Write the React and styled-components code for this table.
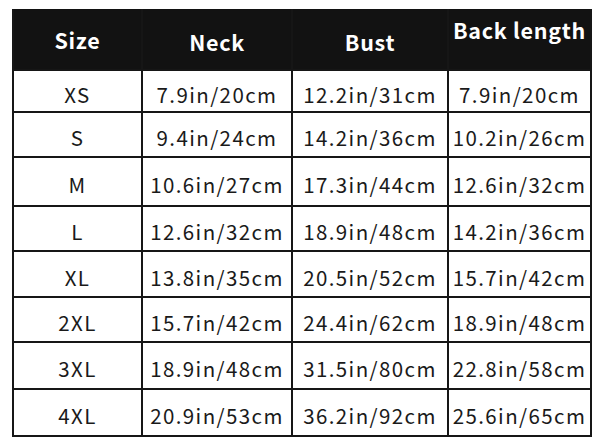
import React from "react";
import styled, { createGlobalStyle } from "styled-components";

const Global = createGlobalStyle`
  html, body { margin: 0; padding: 0; background: #fff; }
  body { font-family: "Noto Sans CJK SC", "Noto Sans", sans-serif; }
`;

const Page = styled.div`
  width: 593px;
  height: 444px;
  padding: 9px 0 0 12px;
  box-sizing: border-box;
  background: #fff;
`;

const Grid = styled.div`
  display: grid;
  width: 580px;
  box-sizing: border-box;
  grid-template-columns: 127px 148px 154px 141px;
  grid-template-rows: 60px 40px 43px 47px 43px 44px 43px 45px 45px;
  gap: 2px;
  padding: 0 2px 2px 2px;
  background: #161616;
`;

const HeadCell = styled.div`
  background: #121212;
  color: #fff;
  font-weight: 700;
  font-size: 21.5px;
  letter-spacing: 0.7px;
  display: flex;
  justify-content: center;
  align-items: ${(p) => (p.$top ? "flex-start" : "center")};
  padding-top: ${(p) => p.$shift || 0}px;
  box-sizing: border-box;
  white-space: nowrap;
  line-height: 1;
`;

const Cell = styled.div`
  background: #fff;
  color: #1a1a1a;
  font-size: 20.5px;
  letter-spacing: 1.4px;
  display: flex;
  justify-content: center;
  align-items: center;
  padding-top: 6px;
  box-sizing: border-box;
  white-space: nowrap;
  line-height: 1;
`;

const headers = [
  { label: "Size", shift: 2 },
  { label: "Neck", shift: 6 },
  { label: "Bust", shift: 6 },
  { label: "Back length", top: true, shift: 10 },
];

const rows = [
  ["XS", "7.9in/20cm", "12.2in/31cm", "7.9in/20cm"],
  ["S", "9.4in/24cm", "14.2in/36cm", "10.2in/26cm"],
  ["M", "10.6in/27cm", "17.3in/44cm", "12.6in/32cm"],
  ["L", "12.6in/32cm", "18.9in/48cm", "14.2in/36cm"],
  ["XL", "13.8in/35cm", "20.5in/52cm", "15.7in/42cm"],
  ["2XL", "15.7in/42cm", "24.4in/62cm", "18.9in/48cm"],
  ["3XL", "18.9in/48cm", "31.5in/80cm", "22.8in/58cm"],
  ["4XL", "20.9in/53cm", "36.2in/92cm", "25.6in/65cm"],
];

export default function App() {
  return (
    <Page>
      <Global />
      <Grid>
        {headers.map((h) => (
          <HeadCell key={h.label} $top={h.top} $shift={h.shift}>
            {h.label}
          </HeadCell>
        ))}
        {rows.map((r) =>
          r.map((v, i) => <Cell key={r[0] + i}>{v}</Cell>)
        )}
      </Grid>
    </Page>
  );
}
